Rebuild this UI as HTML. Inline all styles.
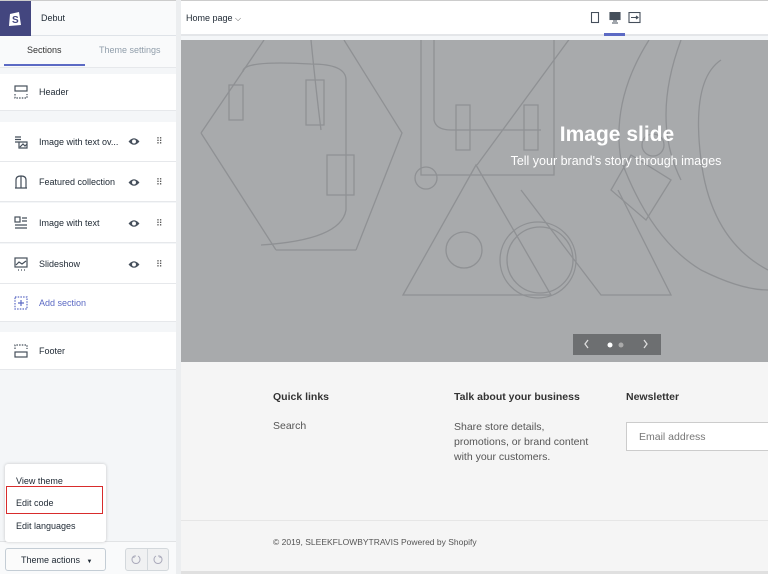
<!DOCTYPE html><html><head><style>
*{box-sizing:border-box;margin:0;padding:0}
body{width:768px;height:574px;overflow:hidden;font-family:"Liberation Sans",sans-serif;background:#f4f6f8;position:relative;font-size:9px;color:#212b36}
.a{position:absolute}
.row{position:absolute;left:0;width:176px;height:40px;background:#fff;border-bottom:1px solid #e6e8eb;display:flex;align-items:center;padding-left:14px}
.row svg{width:14px;height:14px;margin-right:11px}
.row .t{flex:1}
.row svg.eye{position:absolute;left:128px;width:12px;height:9px;margin:0}
.dots{position:absolute;left:156px;font-size:9px;color:#555;letter-spacing:-1px}
</style></head><body>
<div class="a" style="left:0;top:0;width:768px;height:1px;background:#ccc"></div>
<div class="a" style="left:0;top:1px;width:176px;height:35px;background:#f9fafb;border-bottom:1px solid #dfe3e8"></div>
<div class="a" style="left:0;top:1px;width:31px;height:35px;background:#43467f"></div>
<svg class="a" style="left:8px;top:9px" width="15" height="18" viewBox="0 0 15 18"><path d="M2 5 L11 3 L13 16 L1 17 Z" fill="#fff"/><text x="4" y="14" font-size="10" font-weight="bold" fill="#43467f" font-family="Liberation Sans">S</text></svg>
<div class="a" style="left:41px;top:13px;font-size:9px">Debut</div>
<div class="a" style="left:176px;top:0;width:5px;height:574px;background:#eceef0"></div>
<div class="a" style="left:0;top:36px;width:176px;height:32px;background:#f9fafb;border-bottom:1px solid #e6e8eb"></div>
<div class="a" style="left:27px;top:45px;font-size:9px;color:#333">Sections</div>
<div class="a" style="left:99px;top:45px;font-size:9px;color:#919eab">Theme settings</div>
<div class="a" style="left:4px;top:64px;width:81px;height:2px;background:#5c6ac4"></div>
<div class="row" style="top:74px;height:37px"><svg viewBox="0 0 14 14" fill="none" stroke="#454f5b" stroke-width="1.2"><rect x="1" y="1" width="12" height="5"/><path d="M1 9v4h12V9" stroke-dasharray="1.5 1.2"/></svg><span class="t">Header</span></div>
<div class="row" style="top:122px"><svg viewBox="0 0 14 14" fill="none" stroke="#454f5b" stroke-width="1.2"><path d="M1 2h6M1 4.5h6M1 7h4M5 7h8v6H5zM6 12l3-3 2 2 2-2"/></svg><span class="t">Image with text ov...</span><svg class="eye" style="top:15px" viewBox="0 0 11 8"><path d="M0.5 4Q5.5-2 10.5 4Q5.5 10 0.5 4Z" fill="#454f5b"/><circle cx="5.5" cy="4" r="1.8" fill="#fff"/></svg><span class="dots" style="top:14px">⠿</span></div>
<div class="row" style="top:162px"><svg viewBox="0 0 14 14" fill="none" stroke="#454f5b" stroke-width="1.2"><path d="M2 13V5Q2 1 7 1Q12 1 12 5v8zM7 1v12M1 13h12"/></svg><span class="t">Featured collection</span><svg class="eye" style="top:16px" viewBox="0 0 11 8"><path d="M0.5 4Q5.5-2 10.5 4Q5.5 10 0.5 4Z" fill="#454f5b"/><circle cx="5.5" cy="4" r="1.8" fill="#fff"/></svg><span class="dots" style="top:15px">⠿</span></div>
<div class="row" style="top:203px"><svg viewBox="0 0 14 14" fill="none" stroke="#454f5b" stroke-width="1.2"><rect x="1" y="1" width="5" height="5"/><path d="M8 2h5M8 5h5M1 9h12M1 12h12"/></svg><span class="t">Image with text</span><svg class="eye" style="top:16px" viewBox="0 0 11 8"><path d="M0.5 4Q5.5-2 10.5 4Q5.5 10 0.5 4Z" fill="#454f5b"/><circle cx="5.5" cy="4" r="1.8" fill="#fff"/></svg><span class="dots" style="top:15px">⠿</span></div>
<div class="row" style="top:244px"><svg viewBox="0 0 14 14" fill="none" stroke="#454f5b" stroke-width="1.2"><rect x="1" y="1" width="12" height="9"/><path d="M2 8l3-3 3 2 4-3M4 13h1M7 13h1M10 13h1"/></svg><span class="t">Slideshow</span><svg class="eye" style="top:16px" viewBox="0 0 11 8"><path d="M0.5 4Q5.5-2 10.5 4Q5.5 10 0.5 4Z" fill="#454f5b"/><circle cx="5.5" cy="4" r="1.8" fill="#fff"/></svg><span class="dots" style="top:15px">⠿</span></div>
<div class="row" style="top:284px;height:38px;color:#5c6ac4"><svg viewBox="0 0 14 14" fill="none" stroke="#5c6ac4" stroke-width="1.2"><rect x="1" y="1" width="12" height="12" stroke-dasharray="1.5 1.2"/><path d="M7 4v6M4 7h6"/></svg><span class="t">Add section</span></div>
<div class="row" style="top:332px;height:38px"><svg viewBox="0 0 14 14" fill="none" stroke="#454f5b" stroke-width="1.2"><path d="M1 5V1h12v4" stroke-dasharray="1.5 1.2"/><rect x="1" y="8" width="12" height="5"/></svg><span class="t">Footer</span></div>
<div class="a" style="left:0;top:541px;width:176px;height:33px;background:#f9fafb;border-top:1px solid #e1e3e5"></div>
<div class="a" style="left:5px;top:464px;width:101px;height:78px;background:#fff;border-radius:3px;box-shadow:0 0 3px rgba(0,0,0,.2)"></div>
<div class="a" style="left:16px;top:476px;font-size:9px">View theme</div>
<div class="a" style="left:6px;top:486px;width:97px;height:28px;border:1.5px solid #d82c2c"></div>
<div class="a" style="left:16px;top:498px;font-size:9px">Edit code</div>
<div class="a" style="left:16px;top:521px;font-size:9px">Edit languages</div>
<div class="a" style="left:5px;top:548px;width:101px;height:23px;background:#fbfbfb;border:1px solid #c4cdd5;border-radius:3px;font-size:9px;padding:6px 0 0 15px">Theme actions <span style="font-size:6px;margin-left:4px">▼</span></div>
<div class="a" style="left:125px;top:548px;width:44px;height:23px;background:#f0f1f2;border:1px solid #d3d8dc;border-radius:3px"></div>
<div class="a" style="left:147px;top:548px;width:1px;height:23px;background:#d3d8dc"></div>
<svg class="a" style="left:130px;top:553px" width="36" height="13" fill="none" stroke="#aab" stroke-width="1"><path d="M4 3A4 4 0 1 0 8 3M4 3h2M4 3v2"/><path d="M30 3A4 4 0 1 1 26 3M30 3h-2M30 3v2"/></svg>
<div class="a" style="left:181px;top:1px;width:587px;height:35px;background:#fff;border-bottom:2px solid #e4e6e9"></div>
<div class="a" style="left:186px;top:13px;font-size:9px">Home page <span style="font-size:8px;color:#555">⌵</span></div>
<svg class="a" style="left:590px;top:12px" width="54" height="12" fill="none" stroke="#454f5b" stroke-width="1.1"><rect x="1.5" y="0.5" width="7" height="10"/><rect x="20" y="0.5" width="10" height="7" fill="#454f5b"/><path d="M23 9h4M22 11h6"/><rect x="39" y="0.5" width="11" height="10"/><path d="M41 5.5h7M46 4l2 1.5-2 1.5"/></svg>
<div class="a" style="left:604px;top:33px;width:21px;height:3px;background:#5c6ac4"></div>
<svg class="a" style="left:181px;top:40px" width="587" height="322" viewBox="0 0 587 322">
<rect width="587" height="322" fill="#a8aaac"/>
<g fill="none" stroke="#8f9194" stroke-width="1.3">
<path d="M20 93L83 0M20 93L95 210M163 0L221 93L175 210M95 210H175"/>
<path d="M62 32Q60 20 130 24Q165 24 165 40L165 170Q160 200 80 205"/>
<path d="M48 45h14v35h-14zM125 40h18v45h-18zM146 115h27v40h-27z"/>
<path d="M130 0Q135 50 140 90M240 0v135H373V0M253 0v80Q255 90 270 90H360M275 65h14v45h-14zM343 65h14v45h-14z"/>
<path d="M222 255L295 125L370 255ZM296 125L395 -10M340 150L420 255H490L437 150"/>
<circle cx="245" cy="138" r="11"/><circle cx="472" cy="105" r="11"/><circle cx="357" cy="220" r="38"/><circle cx="359" cy="220" r="33"/><circle cx="283" cy="210" r="18"/>
<path d="M468 0Q430 60 440 120Q470 200 520 230Q560 250 587 250M500 0Q470 80 500 140M540 20Q510 40 520 120Q530 200 587 230"/>
<path d="M450 115L490 140L465 180L430 150Z"/>
</g>
<text x="436" y="101" font-family="Liberation Sans" font-weight="bold" font-size="21" fill="#fff" text-anchor="middle">Image slide</text>
<text x="435" y="125" font-family="Liberation Sans" font-size="12.5" fill="#fff" text-anchor="middle">Tell your brand's story through images</text>
<rect x="392" y="294" width="88" height="21" fill="#6d6f71"/>
<path d="M407 300l-3 4 3 4M463 300l3 4-3 4" stroke="#ddd" stroke-width="1.3" fill="none"/>
<circle cx="429" cy="305" r="2.5" fill="#fff"/><circle cx="440" cy="305" r="2.5" fill="#aaa"/>
</svg>
<div class="a" style="left:181px;top:362px;width:587px;height:212px;background:#f5f5f5"></div>
<div class="a" style="left:181px;top:520px;width:587px;height:1px;background:#e6e6e6"></div>
<div class="a" style="left:273px;top:391px;font-size:10.5px;font-weight:bold;color:#333">Quick links</div>
<div class="a" style="left:454px;top:391px;font-size:10.5px;font-weight:bold;color:#333">Talk about your business</div>
<div class="a" style="left:626px;top:391px;font-size:10.5px;font-weight:bold;color:#333">Newsletter</div>
<div class="a" style="left:273px;top:420px;font-size:10.5px;color:#555">Search</div>
<div class="a" style="left:454px;top:420px;font-size:10.5px;color:#555;line-height:15px;width:180px">Share store details,<br>promotions, or brand content<br>with your customers.</div>
<div class="a" style="left:626px;top:422px;width:150px;height:29px;background:#fff;border:1px solid #ccc;font-size:10.5px;color:#777;padding:8px 0 0 12px">Email address</div>
<div class="a" style="left:273px;top:537px;font-size:8.5px;color:#555">© 2019, SLEEKFLOWBYTRAVIS Powered by Shopify</div>
<div class="a" style="left:181px;top:571px;width:587px;height:3px;background:#e0e0e0"></div>
</body></html>
